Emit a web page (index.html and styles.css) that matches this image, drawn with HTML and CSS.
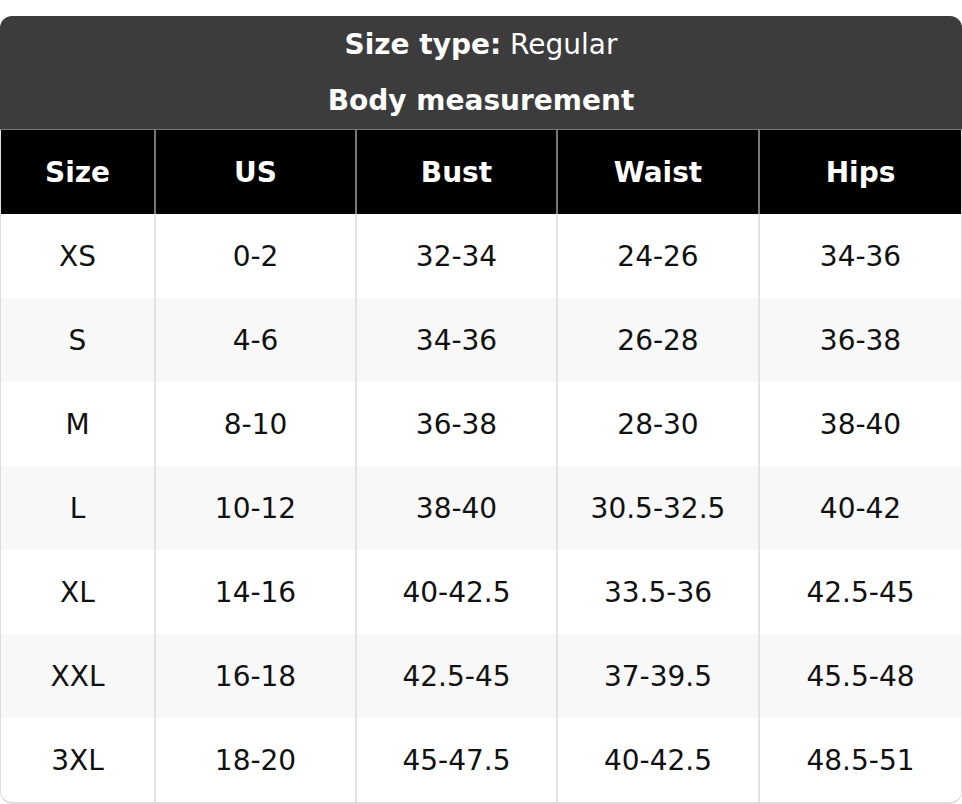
FILE: index.html
```html
<!DOCTYPE html>
<html>
<head>
<meta charset="utf-8">
<link rel="stylesheet" href="styles.css">
</head>
<body>
<div class="chart">
  <div class="title">
    <div class="title-line"><span><b>Size type:</b> Regular</span></div>
    <div class="title-line"><b>Body measurement</b></div>
  </div>
  <div class="table">
    <div class="row head">
      <div class="cell">Size</div><div class="cell">US</div><div class="cell">Bust</div><div class="cell">Waist</div><div class="cell">Hips</div>
    </div>
    <div class="row">
      <div class="cell">XS</div><div class="cell">0-2</div><div class="cell">32-34</div><div class="cell">24-26</div><div class="cell">34-36</div>
    </div>
    <div class="row alt">
      <div class="cell">S</div><div class="cell">4-6</div><div class="cell">34-36</div><div class="cell">26-28</div><div class="cell">36-38</div>
    </div>
    <div class="row">
      <div class="cell">M</div><div class="cell">8-10</div><div class="cell">36-38</div><div class="cell">28-30</div><div class="cell">38-40</div>
    </div>
    <div class="row alt">
      <div class="cell">L</div><div class="cell">10-12</div><div class="cell">38-40</div><div class="cell">30.5-32.5</div><div class="cell">40-42</div>
    </div>
    <div class="row">
      <div class="cell">XL</div><div class="cell">14-16</div><div class="cell">40-42.5</div><div class="cell">33.5-36</div><div class="cell">42.5-45</div>
    </div>
    <div class="row alt">
      <div class="cell">XXL</div><div class="cell">16-18</div><div class="cell">42.5-45</div><div class="cell">37-39.5</div><div class="cell">45.5-48</div>
    </div>
    <div class="row">
      <div class="cell">3XL</div><div class="cell">18-20</div><div class="cell">45-47.5</div><div class="cell">40-42.5</div><div class="cell">48.5-51</div>
    </div>
  </div>
</div>
</body>
</html>
```
FILE: styles.css
```css
html, body {
  margin: 0;
  padding: 0;
  background: #fff;
}
body {
  font-family: "DejaVu Sans", sans-serif;
  font-size: 28px;
  color: #111;
}
.chart {
  margin-top: 16px;
  width: 962px;
  border-radius: 12px;
  overflow: hidden;
}
.title {
  background: #3c3c3c;
  color: #fff;
  border-bottom: 1px solid #777;
}
.title-line {
  height: 56px;
  display: flex;
  align-items: center;
  justify-content: center;
}
.title-line + .title-line {
  height: 57px;
}
.title b {
  font-weight: bold;
}
.table {
  border-left: 1px solid #ddd;
  border-right: 1px solid #ddd;
  border-bottom: 2px solid #ddd;
  border-radius: 0 0 12px 12px;
  overflow: hidden;
}
.row {
  display: grid;
  grid-template-columns: 153px 201px 201px 202px 1fr;
  height: 84px;
}
.cell {
  display: flex;
  align-items: center;
  justify-content: center;
}
.cell + .cell {
  border-left: 2px solid #e2e2e2;
}
.row.alt {
  background: #f8f8f8;
}
.row.head {
  background: #000;
  color: #fff;
  font-weight: bold;
}
.row.head .cell + .cell {
  border-left-color: #777;
}
```
